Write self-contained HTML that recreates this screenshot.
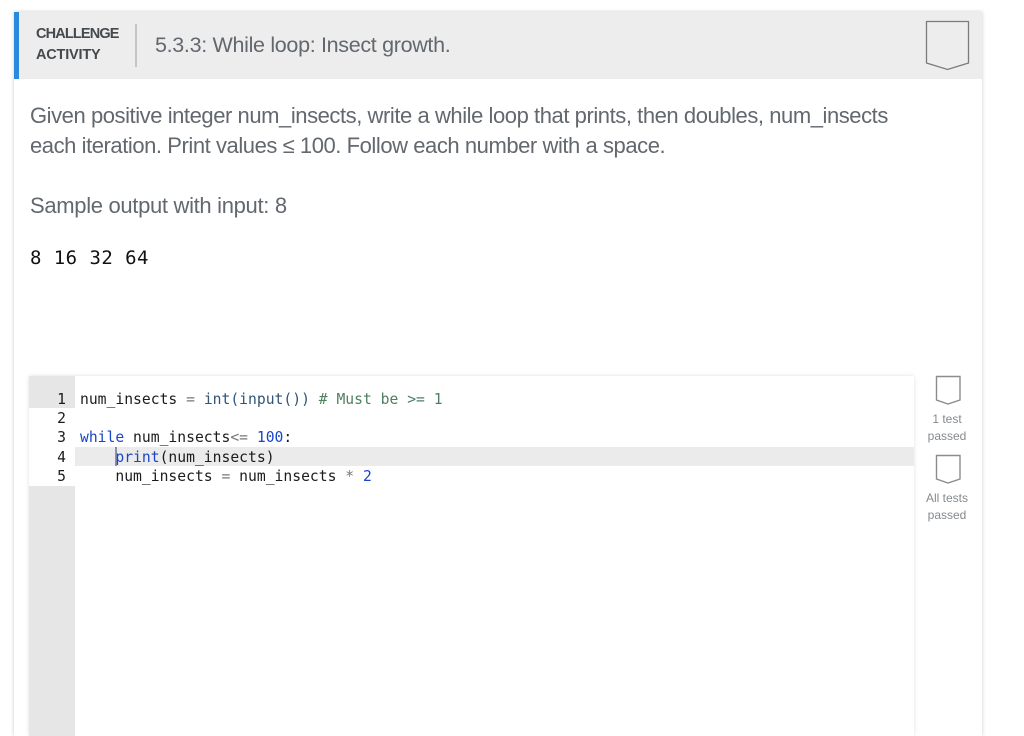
<!DOCTYPE html>
<html><head><meta charset="utf-8">
<style>
html,body{margin:0;padding:0;background:#fff;width:1024px;height:736px;overflow:hidden}
body{position:relative;font-family:"Liberation Sans",sans-serif}
.a{position:absolute;white-space:pre}
.t{color:#62686e;font-size:22px;line-height:30px;letter-spacing:-.44px}
.c{font-family:"DejaVu Sans Mono","Liberation Mono",monospace;font-size:14.7px;line-height:19.4px;color:#1c1c1c}
.n{width:37px;text-align:right;left:29px}
.s{color:#777}.b{color:#1a45c8}.g{color:#4f8062}.p{color:#2f5578}
.l{color:#858a8e;font-size:12px;line-height:17px;text-align:center;width:66px;left:914px}
</style></head><body>
<div class="a" style="left:14px;top:12px;width:968px;height:724px;background:#fff;box-shadow:0 0 4px rgba(0,0,0,.2)"></div>
<div class="a" style="left:14px;top:12px;width:968px;height:67px;background:#ededed"></div>
<div class="a" style="left:14px;top:12px;width:5px;height:67px;background:#2a8bdc"></div>
<div class="a" style="left:36px;top:24px;font-size:14.5px;line-height:20.5px;font-weight:bold;color:#44494e;letter-spacing:-.2px"><span style="letter-spacing:-.85px">CHALLENGE</span>
ACTIVITY</div>
<div class="a" style="left:135px;top:24px;width:2px;height:43px;background:#c4c4c4"></div>
<div class="a" style="left:155px;top:31px;font-size:21.5px;line-height:28px;color:#62686e;letter-spacing:-.32px">5.3.3: While loop: Insect growth.</div>
<svg class="a" style="left:925px;top:20px" width="46" height="52"><path d="M1.5 1.5H43.5V43L22.5 49.5L1.5 43Z" fill="none" stroke="#7b7b7b" stroke-width="1.3"/></svg>

<div class="a t" style="left:30px;top:101px">Given positive integer num_insects, write a while loop that prints, then doubles, num_insects
each iteration. Print values ≤ 100. Follow each number with a space.</div>
<div class="a t" style="left:30px;top:191px;letter-spacing:-.32px">Sample output with input: 8</div>
<div class="a c" style="left:30px;top:247px;font-size:19px;line-height:22px;color:#111;letter-spacing:.45px">8 16 32 64</div>

<div class="a" style="left:29px;top:376px;width:885px;height:360px;background:#fff;box-shadow:0 0 4px rgba(0,0,0,.12)"></div>
<div class="a" style="left:29px;top:376px;width:46px;height:360px;background:#e6e6e6"></div>
<div class="a" style="left:29px;top:408px;width:46px;height:78px;background:#fff"></div>
<div class="a" style="left:75px;top:447px;width:839px;height:19px;background:#ebebeb"></div>
<div class="a" style="left:115px;top:447px;width:2px;height:19px;background:#8a93a8"></div>
<div class="a c n" style="top:390px">1</div>
<div class="a c n" style="top:409px">2</div>
<div class="a c n" style="top:428.4px">3</div>
<div class="a c n" style="top:447.8px">4</div>
<div class="a c n" style="top:467px">5</div>
<div class="a c" style="left:80px;top:390px">num_insects <span class="s">=</span> <span class="p">int(input())</span> <span class="g"># Must be &gt;= 1</span></div>
<div class="a c" style="left:80px;top:428.4px"><span class="b">while</span> num_insects<span class="s">&lt;=</span> <span class="b">100</span>:</div>
<div class="a c" style="left:80px;top:447.8px">    <span class="b">print</span>(num_insects)</div>
<div class="a c" style="left:80px;top:467px">    num_insects <span class="s">=</span> num_insects <span class="s">*</span> <span class="b">2</span></div>

<svg class="a" style="left:935px;top:375px" width="27" height="30"><path d="M1.5 1.5H25V25L13 29L1.5 25Z" fill="none" stroke="#8c8c8c" stroke-width="1.4"/></svg>
<div class="a l" style="top:411px">1 test
passed</div>
<svg class="a" style="left:935px;top:454px" width="27" height="30"><path d="M1.5 1.5H25V25L13 29L1.5 25Z" fill="none" stroke="#8c8c8c" stroke-width="1.4"/></svg>
<div class="a l" style="top:490px">All tests
passed</div>
</body></html>
